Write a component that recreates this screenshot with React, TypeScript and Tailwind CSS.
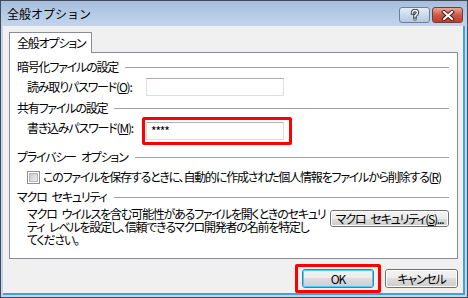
import React from "react";

function HelpGlyph() {
  return (
    <svg width="12" height="12" viewBox="0 0 12 12">
      <path d="M3.5 4 Q3.5 1.5 6 1.5 Q8.5 1.5 8.5 3.8 Q8.5 5.2 6.8 6 L6 6.6 L6 7.8" fill="none" stroke="#33404f" strokeWidth="3.4" strokeLinecap="square" />
      <rect x="4.6" y="9" width="2.8" height="2.4" fill="#33404f" />
      <path d="M3.5 4 Q3.5 1.5 6 1.5 Q8.5 1.5 8.5 3.8 Q8.5 5.2 6.8 6 L6 6.6 L6 7.8" fill="none" stroke="#ffffff" strokeWidth="1.4" strokeLinecap="square" />
      <rect x="5.3" y="9.6" width="1.4" height="1.2" fill="#ffffff" />
    </svg>
  );
}

function CloseGlyph() {
  return (
    <svg width="14" height="11" viewBox="0 0 14 11">
      <path d="M3 2 L11 9 M11 2 L3 9" stroke="#4a1f1a" strokeWidth="4" strokeLinecap="square" />
      <path d="M3 2 L11 9 M11 2 L3 9" stroke="#ffffff" strokeWidth="2" strokeLinecap="square" />
    </svg>
  );
}

function Sp() {
  return <span className="inline-block w-[5px]" />;
}

function Header({ children }: { children: React.ReactNode }) {
  return (
    <div className="flex h-[16px] items-center pl-[7px] pr-[8px]">
      <span className="whitespace-nowrap leading-[16px]">{children}</span>
      <div className="ml-[7px] h-px flex-1 bg-[#a0a0a0]" />
    </div>
  );
}

function TextBox({ value }: { value?: string }) {
  return (
    <div className="flex h-[18px] w-[138px] items-center border border-[#dbdfe6] border-t-[#abadb3] bg-white pl-[4px] text-[12px] leading-none">
      {value}
    </div>
  );
}

function VistaButton({ children, def, className }: { children: React.ReactNode; def?: boolean; className?: string }) {
  return (
    <div
      className={
        "flex items-center justify-center rounded-[3px] border " +
        (def ? "border-[#3c7fb1] " : "border-[#707070] ") +
        (className ?? "")
      }
    >
      <div
        className={
          "flex h-full w-full items-center justify-center whitespace-nowrap rounded-[2px] border bg-[linear-gradient(#f2f2f2_0%,#ebebeb_50%,#dddddd_50%,#cfcfcf_100%)] " +
          (def ? "border-[#48d0f6]" : "border-[#fcfcfc]")
        }
      >
        {children}
      </div>
    </div>
  );
}

export default function App() {
  return (
    <div className="relative flex h-[298px] w-[468px] flex-col overflow-hidden border border-[#3f4a5b] bg-[#c2d5ec] font-['Noto_Sans_CJK_JP',sans-serif] text-[12px] tracking-[-1.2px] text-black [font-feature-settings:'palt']">
      {/* title bar */}
      <div className="flex h-[25px] shrink-0 items-start bg-gradient-to-b from-[#a7bedb] to-[#c2d5ec] pl-[6px]">
        <span className="mt-[5px] leading-[15px] tracking-normal [font-feature-settings:normal]">全般オプション</span>
        <div className="ml-auto mr-[4px] mt-[6px] flex gap-[2px]">
          <div className="flex h-[16px] w-[31px] items-center justify-center rounded-[3px] border border-[#6f7f96] bg-gradient-to-b from-[#e3ecf6] to-[#b5c8e0]">
            <HelpGlyph />
          </div>
          <div className="flex h-[16px] w-[31px] items-center justify-center rounded-[3px] border border-[#7a3a34] bg-gradient-to-b from-[#e8a796] via-[#cc5a48] to-[#b9402f]">
            <CloseGlyph />
          </div>
        </div>
      </div>

      {/* client area */}
      <div className="ml-[2px] mr-[2px] mb-[2px] flex flex-1 flex-col border-b-2 border-r-2 border-[#3da3dd] bg-[#f0f0f0]">
        <div className="ml-[6px] mt-[6px] flex w-[449px] flex-col">
          {/* tab */}
          <div className="relative z-10 -mb-px flex h-[21px] w-[83px] items-center whitespace-nowrap border border-b-0 border-[#898c95] bg-white pl-[7px]">
            <span className="leading-[14px]">全般オプション</span>
          </div>
          {/* panel */}
          <div className="flex h-[207px] flex-col border border-[#898c95] bg-white">
            <div className="mt-[6px]">
              <Header>暗号化ファイルの設定</Header>
            </div>
            <div className="mt-[3px] flex h-[18px] items-center">
              <div className="w-[136px] whitespace-nowrap pl-[17px] leading-[14px]">
                読み取りパスワード(<u>O</u>):
              </div>
              <TextBox />
            </div>
            <div className="mt-[4px]">
              <Header>共有ファイルの設定</Header>
            </div>
            <div className="mt-[6px] flex items-start">
              <div className="w-[136px] whitespace-nowrap pl-[17px] leading-[12px]">
                書き込みパスワード(<u>M</u>):
              </div>
              <div className="relative">
                <TextBox value="****" />
                <div className="absolute -bottom-[5px] -left-[4px] -right-[8px] -top-[5px] rounded-[2px] border-[3px] border-[#ff0000]" />
              </div>
            </div>
            <div className="mt-[9px]">
              <Header>
                プライバシー<Sp />オプション
              </Header>
            </div>
            <div className="mt-[4px] flex h-[16px] items-center pl-[17px]">
              <div className="flex h-[13px] w-[13px] shrink-0 items-center justify-center border border-[#8e8f8f] bg-white">
                <div className="h-[9px] w-[9px] border border-[#b4b7bb] bg-gradient-to-br from-[#c6c9cd] to-[#eeeeee]" />
              </div>
              <span className="ml-[3px] whitespace-nowrap leading-[16px]">
                このファイルを保存するときに、自動的に作成された個人情報をファイルから削除する(<u>R</u>)
              </span>
            </div>
            <div className="mt-[4px]">
              <Header>
                マクロ<Sp />セキュリティ
              </Header>
            </div>
            <div className="mt-[2px] flex items-start pr-[8px]">
              <div className="pl-[17px] leading-[13px]">
                <div className="whitespace-nowrap">
                  マクロ<Sp />ウイルスを含む可能性があるファイルを開くときのセキュリ
                </div>
                <div className="whitespace-nowrap">
                  ティ<Sp />レベルを設定し、信頼できるマクロ開発者の名前を特定し
                </div>
                <div className="whitespace-nowrap">てください。</div>
              </div>
              <VistaButton className="ml-auto mt-[3px] h-[17px] w-[119px]">
                <span className="leading-none">
                  マクロ<Sp />セキュリティ(<u>S</u>)...
                </span>
              </VistaButton>
            </div>
          </div>
          {/* bottom buttons */}
          <div className="mt-[10px] flex justify-end gap-[11px]">
            <div className="relative">
              <VistaButton def className="h-[19px] w-[72px]">
                <span className="leading-none">OK</span>
              </VistaButton>
              <div className="absolute -bottom-[5px] -left-[7px] -right-[7px] -top-[5px] rounded-[2px] border-[3px] border-[#ff0000]" />
            </div>
            <VistaButton className="h-[19px] w-[73px]">
              <span className="leading-none">キャンセル</span>
            </VistaButton>
          </div>
        </div>
      </div>
    </div>
  );
}
